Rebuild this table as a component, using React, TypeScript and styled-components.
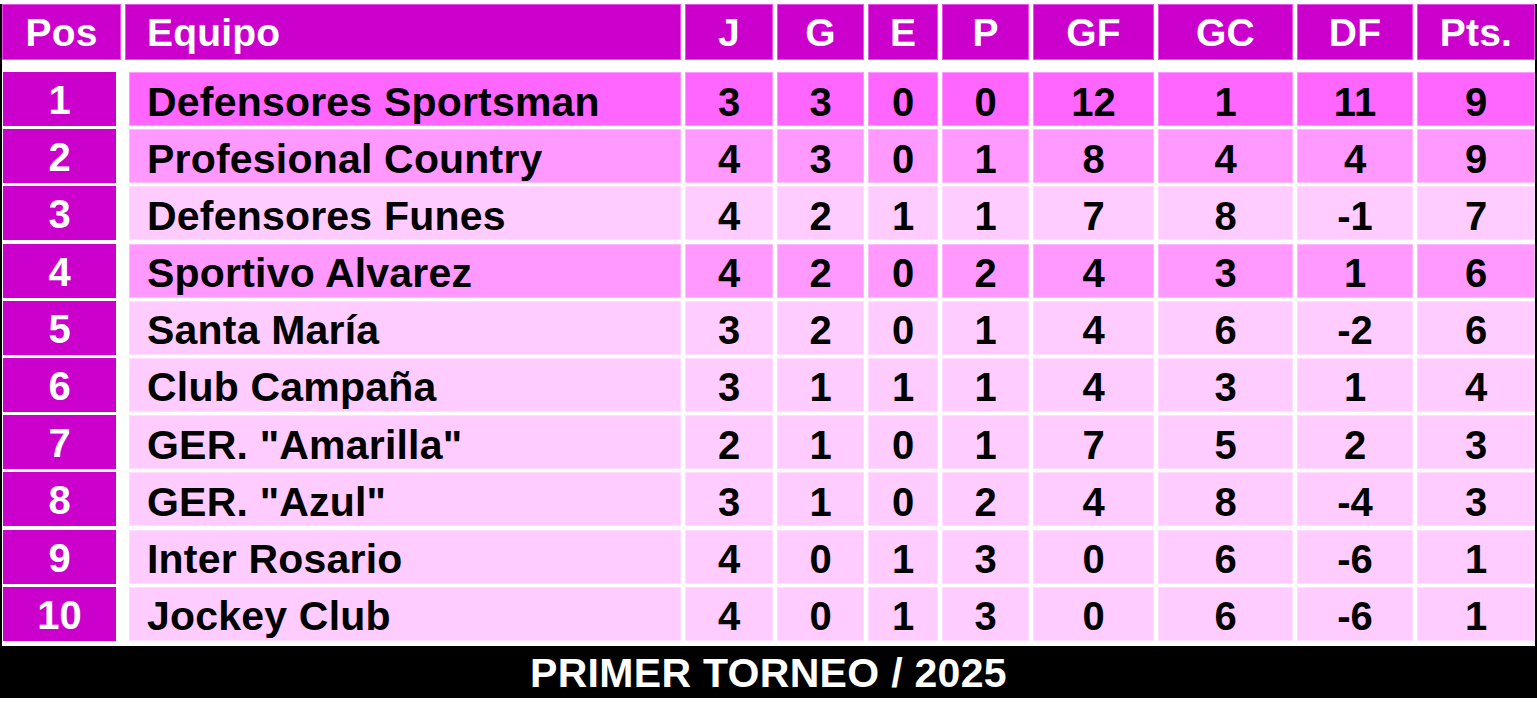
import styled, { createGlobalStyle } from "styled-components"

type Team = {
  name: string;
  j: number;
  g: number;
  e: number;
  p: number;
  gf: number;
  gc: number;
  pts: number;
  tone: "lead" | "mid" | "soft";
}

const teams: Team[] = [
  { name: "Defensores Sportsman", j: 3, g: 3, e: 0, p: 0, gf: 12, gc: 1, pts: 9, tone: "lead" },
  { name: "Profesional Country", j: 4, g: 3, e: 0, p: 1, gf: 8, gc: 4, pts: 9, tone: "mid" },
  { name: "Defensores Funes", j: 4, g: 2, e: 1, p: 1, gf: 7, gc: 8, pts: 7, tone: "soft" },
  { name: "Sportivo Alvarez", j: 4, g: 2, e: 0, p: 2, gf: 4, gc: 3, pts: 6, tone: "mid" },
  { name: "Santa María", j: 3, g: 2, e: 0, p: 1, gf: 4, gc: 6, pts: 6, tone: "soft" },
  { name: "Club Campaña", j: 3, g: 1, e: 1, p: 1, gf: 4, gc: 3, pts: 4, tone: "soft" },
  { name: "GER. \"Amarilla\"", j: 2, g: 1, e: 0, p: 1, gf: 7, gc: 5, pts: 3, tone: "soft" },
  { name: "GER. \"Azul\"", j: 3, g: 1, e: 0, p: 2, gf: 4, gc: 8, pts: 3, tone: "soft" },
  { name: "Inter Rosario", j: 4, g: 0, e: 1, p: 3, gf: 0, gc: 6, pts: 1, tone: "soft" },
  { name: "Jockey Club", j: 4, g: 0, e: 1, p: 3, gf: 0, gc: 6, pts: 1, tone: "soft" },
]

const toneColors = {
  lead: "#FF66FF",
  mid: "#FF99FF",
  soft: "#FFCCFF",
}

const GlobalStyle = createGlobalStyle`
  html, body {
    margin: 0;
    padding: 0;
    background: #ffffff;
  }
  body {
    font-family: "Liberation Sans", Arial, sans-serif;
  }
`

const Page = styled.div`
  width: 1537px;
  height: 704px;
  padding-top: 4px;
  box-sizing: border-box;
  background: #ffffff;
  overflow: hidden;
`

const Frame = styled.div`
  border-left: 2px solid #000;
  border-right: 2px solid #000;
  display: flex;
  flex-direction: column;
`

const statColumns = "88px 87px 70px 87px 121px 135px 116px 118px"

const HeaderRow = styled.div`
  display: grid;
  grid-template-columns: 119px 556px ${statColumns};
  column-gap: 4px;
  height: 56px;
`

const HeaderCell = styled.div<{ $left?: boolean }>`
  background: #CC00CC;
  box-shadow: inset 0 0 0 1px rgba(255, 150, 255, 0.55);
  color: #ffffff;
  font-weight: 700;
  font-size: 39px;
  letter-spacing: 0.2px;
  display: flex;
  align-items: center;
  justify-content: ${({ $left }) => ($left ? "flex-start" : "center")};
  padding-left: ${({ $left }) => ($left ? "22px" : "0")};
  padding-top: 1px;
  box-sizing: border-box;
`

const Body = styled.div`
  display: flex;
  flex-direction: column;
  gap: 3.2px;
  margin-top: 12px;
  padding-left: 1px;
`

const Row = styled.div`
  display: grid;
  grid-template-columns: 122px 552px ${statColumns};
  column-gap: 4px;
  height: 54px;
`

const PosCell = styled.div`
  width: 113px;
  background: #CC00CC;
  color: #ffffff;
  font-weight: 700;
  font-size: 40px;
  display: flex;
  align-items: center;
  justify-content: center;
  padding-top: 3px;
  box-sizing: border-box;
`

const Cell = styled.div<{ $bg: string; $left?: boolean }>`
  background: ${({ $bg }) => $bg};
  box-shadow: inset 0 0 0 1px rgba(255, 255, 255, 0.35);
  color: #000000;
  font-weight: 700;
  font-size: ${({ $left }) => ($left ? "41px" : "40px")};
  letter-spacing: ${({ $left }) => ($left ? "0.2px" : "0")};
  display: flex;
  align-items: center;
  justify-content: ${({ $left }) => ($left ? "flex-start" : "center")};
  padding-left: ${({ $left }) => ($left ? "18px" : "0")};
  padding-top: 6px;
  box-sizing: border-box;
  white-space: nowrap;
`

const Footer = styled.div`
  margin-top: 5px;
  height: 52px;
  background: #000000;
  color: #ffffff;
  font-weight: 700;
  font-size: 41px;
  letter-spacing: 0.3px;
  display: flex;
  align-items: center;
  justify-content: center;
  padding-top: 3px;
  box-sizing: border-box;
`

const headers = ["J", "G", "E", "P", "GF", "GC", "DF", "Pts."]

export default function App() {
  return (
    <>
      <GlobalStyle />
      <Page>
        <Frame>
          <HeaderRow>
            <HeaderCell>Pos</HeaderCell>
            <HeaderCell $left>Equipo</HeaderCell>
            {headers.map((h) => (
              <HeaderCell key={h}>{h}</HeaderCell>
            ))}
          </HeaderRow>
          <Body>
            {teams.map((t, i) => {
              const bg = toneColors[t.tone]
              const stats = [t.j, t.g, t.e, t.p, t.gf, t.gc, t.gf - t.gc, t.pts]
              return (
                <Row key={t.name}>
                  <PosCell>{i + 1}</PosCell>
                  <Cell $bg={bg} $left>{t.name}</Cell>
                  {stats.map((s, k) => (
                    <Cell key={k} $bg={bg}>{s}</Cell>
                  ))}
                </Row>
              )
            })}
          </Body>
          <Footer>PRIMER TORNEO / 2025</Footer>
        </Frame>
      </Page>
    </>
  )
}
